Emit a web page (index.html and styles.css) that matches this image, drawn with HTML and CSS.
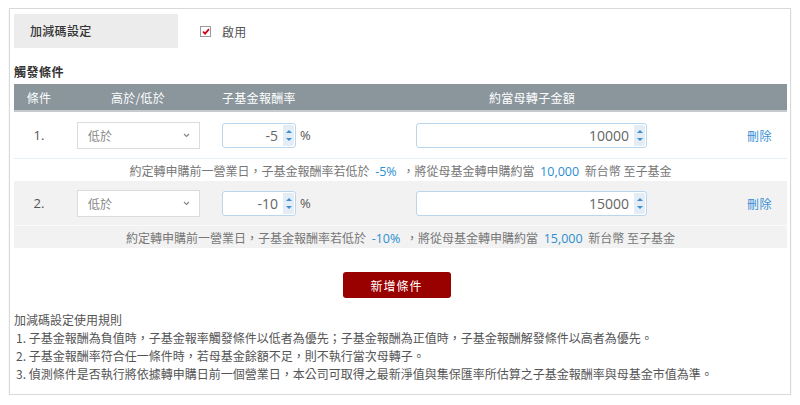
FILE: index.html
```html
<!DOCTYPE html>
<html lang="zh-Hant">
<head>
<meta charset="utf-8">
<link rel="stylesheet" href="styles.css">
</head>
<body>
<div class="frame">
  <div class="top">
    <div class="label-box">加減碼設定</div>
    <label class="enable"><span class="checkbox"><svg width="8" height="7" viewBox="0 0 8 7"><path d="M1 3.6 L3.1 5.6 L7 1.2" fill="none" stroke="#d0021b" stroke-width="1.8"/></svg></span>啟用</label>
  </div>
  <div class="section-title">觸發條件</div>
  <div class="table">
    <div class="thead">
      <div class="c1">條件</div>
      <div class="c2">高於/低於</div>
      <div class="c3">子基金報酬率</div>
      <div class="c4">約當母轉子金額</div>
      <div class="c5"></div>
    </div>
    <div class="group">
      <div class="row">
        <div class="c1 num">1.</div>
        <div class="c2"><div class="select"><span>低於</span><svg width="7" height="5" viewBox="0 0 7 5"><path d="M1 1 L3.5 3.5 L6 1" fill="none" stroke="#888" stroke-width="1.2"/></svg></div></div>
        <div class="c3"><div class="spin small"><span class="val">-5</span><span class="arrows"><i class="up"></i><i class="down"></i></span></div><span class="pct">%</span></div>
        <div class="c4"><div class="spin big"><span class="val">10000</span><span class="arrows"><i class="up"></i><i class="down"></i></span></div></div>
        <div class="c5"><a class="del">刪除</a></div>
      </div>
      <div class="note">約定轉申購前一營業日，子基金報酬率若低於 <b>-5%</b> ，將從母基金轉申購約當 <b>10,000</b> 新台幣 至子基金</div>
    </div>
    <div class="group alt">
      <div class="row">
        <div class="c1 num">2.</div>
        <div class="c2"><div class="select"><span>低於</span><svg width="7" height="5" viewBox="0 0 7 5"><path d="M1 1 L3.5 3.5 L6 1" fill="none" stroke="#888" stroke-width="1.2"/></svg></div></div>
        <div class="c3"><div class="spin small"><span class="val">-10</span><span class="arrows"><i class="up"></i><i class="down"></i></span></div><span class="pct">%</span></div>
        <div class="c4"><div class="spin big"><span class="val">15000</span><span class="arrows"><i class="up"></i><i class="down"></i></span></div></div>
        <div class="c5"><a class="del">刪除</a></div>
      </div>
      <div class="note">約定轉申購前一營業日，子基金報酬率若低於 <b>-10%</b> ，將從母基金轉申購約當 <b>15,000</b> 新台幣 至子基金</div>
    </div>
  </div>
  <div class="actions"><button class="add">新增條件</button></div>
  <div class="rules">
    <div class="rules-title">加減碼設定使用規則</div>
    <div>1. 子基金報酬為負值時，子基金報率觸發條件以低者為優先；子基金報酬為正值時，子基金報酬解發條件以高者為優先。</div>
    <div>2. 子基金報酬率符合任一條件時，若母基金餘額不足，則不執行當次母轉子。</div>
    <div>3. 偵測條件是否執行將依據轉申購日前一個營業日，本公司可取得之最新淨值與集保匯率所估算之子基金報酬率與母基金市值為準。</div>
  </div>
</div>
</body>
</html>
```

FILE: styles.css
```css
* { box-sizing: border-box; }
html, body { margin: 0; padding: 0; background: #fff; }
body {
  font-family: "Noto Sans CJK TC", "Open Sans", sans-serif;
  font-size: 12px;
  color: #444;
}
.frame {
  margin: 8px 9px 0 9px;
  width: 782px;
  height: 387px;
  border: 1px solid #d9d9d9;
  box-shadow: 0 1px 2px rgba(0,0,0,0.08);
  padding: 5px 3px 0 4px;
}
.top { display: flex; align-items: center; height: 34px; }
.label-box {
  width: 164px;
  height: 34px;
  background: #ececec;
  color: #333;
  font-weight: 500;
  padding-left: 16px;
  line-height: 34px;
  letter-spacing: 0.3px;
}
.enable { display: flex; align-items: center; margin-left: 22px; color: #555; letter-spacing: 0.3px; }
.checkbox {
  width: 11px; height: 11px;
  border: 1px solid #9a9a9a;
  background: #fff;
  display: inline-flex; align-items: center; justify-content: center;
  margin-right: 11px;
}
.section-title {
  margin-top: 16px;
  line-height: 16px;
  margin-bottom: 4px;
  font-weight: 700;
  color: #333;
  letter-spacing: 0.5px;
}
.table { width: 773px; }
.thead, .row {
  display: grid;
  grid-template-columns: 50px 148px 190px 260px 1fr;
  align-items: center;
}
.thead {
  height: 28px;
  background: #8a959c;
  border-bottom: 2px solid #c5cbcf;
  color: #fff;
  font-size: 12px;
  letter-spacing: 0.3px;
}
.thead .c1, .thead .c2, .thead .c4 { text-align: center; }
.thead .c3 { padding-left: 10px; }
.row .c1 { text-align: center; }
.row { height: 46px; }
.alt .row { height: 44px; }
.alt { background: #f2f2f2; }
.num { font-family: "Open Sans", sans-serif; font-size: 13px; color: #555; }
.row .c2 { padding-left: 13px; }
.select {
  width: 123px; height: 27px;
  border: 1px solid #dcdcdc;
  background: #fff;
  display: flex; align-items: center; justify-content: space-between;
  padding: 0 9px 0 10px;
  color: #888;
}
.row .c3 { padding-left: 10px; display: flex; align-items: center; }
.spin {
  height: 25px;
  border: 1px solid #b9d6ec;
  border-radius: 3px;
  background: #fff;
  display: flex; align-items: stretch;
}
.spin.small { width: 74px; }
.spin.big { width: 231px; margin-left: 14px; }
.val {
  flex: 1;
  text-align: right;
  font-family: "Open Sans", sans-serif;
  font-size: 14px;
  color: #666;
  line-height: 23px;
  padding-right: 5px;
}
.arrows {
  width: 11px;
  margin: 1px 1px 1px 0;
  background: #e4edf5;
  display: flex; flex-direction: column; align-items: center; justify-content: center; gap: 5px;
  border-radius: 0 2px 2px 0;
}
.arrows i { display: block; width: 0; height: 0; border-left: 3px solid transparent; border-right: 3px solid transparent; }
.arrows .up { border-bottom: 3.5px solid #3c8fd0; }
.arrows .down { border-top: 3.5px solid #3c8fd0; }
.pct { margin-left: 4px; font-family: "Open Sans", sans-serif; font-size: 13px; color: #555; }
.row .c5 { text-align: right; padding-right: 15px; }
.del { color: #3a8fd6; font-size: 12px; letter-spacing: 0.5px; }
.note {
  height: 23px;
  line-height: 23px;
  border-top: 1px solid #e8eff4;
  text-align: center;
  color: #777;
}
.alt .note { border-top-color: #fafafa; }
.note b { font-weight: 400; color: #2a8fd0; font-family: "Open Sans", sans-serif; font-size: 12.5px; margin: 0 3px; }
.actions { display: flex; justify-content: center; margin-top: 24px; padding-right: 8px; }
.add {
  width: 108px; height: 26px;
  background: #990000;
  border: none;
  border-radius: 3px;
  color: #fff;
  font-family: "Noto Sans CJK TC", sans-serif;
  font-size: 12px;
  letter-spacing: 1px;
}
.rules { margin-top: 13px; line-height: 18px; color: #555; }
.rules > div:not(.rules-title) { padding-left: 2px; }
```
